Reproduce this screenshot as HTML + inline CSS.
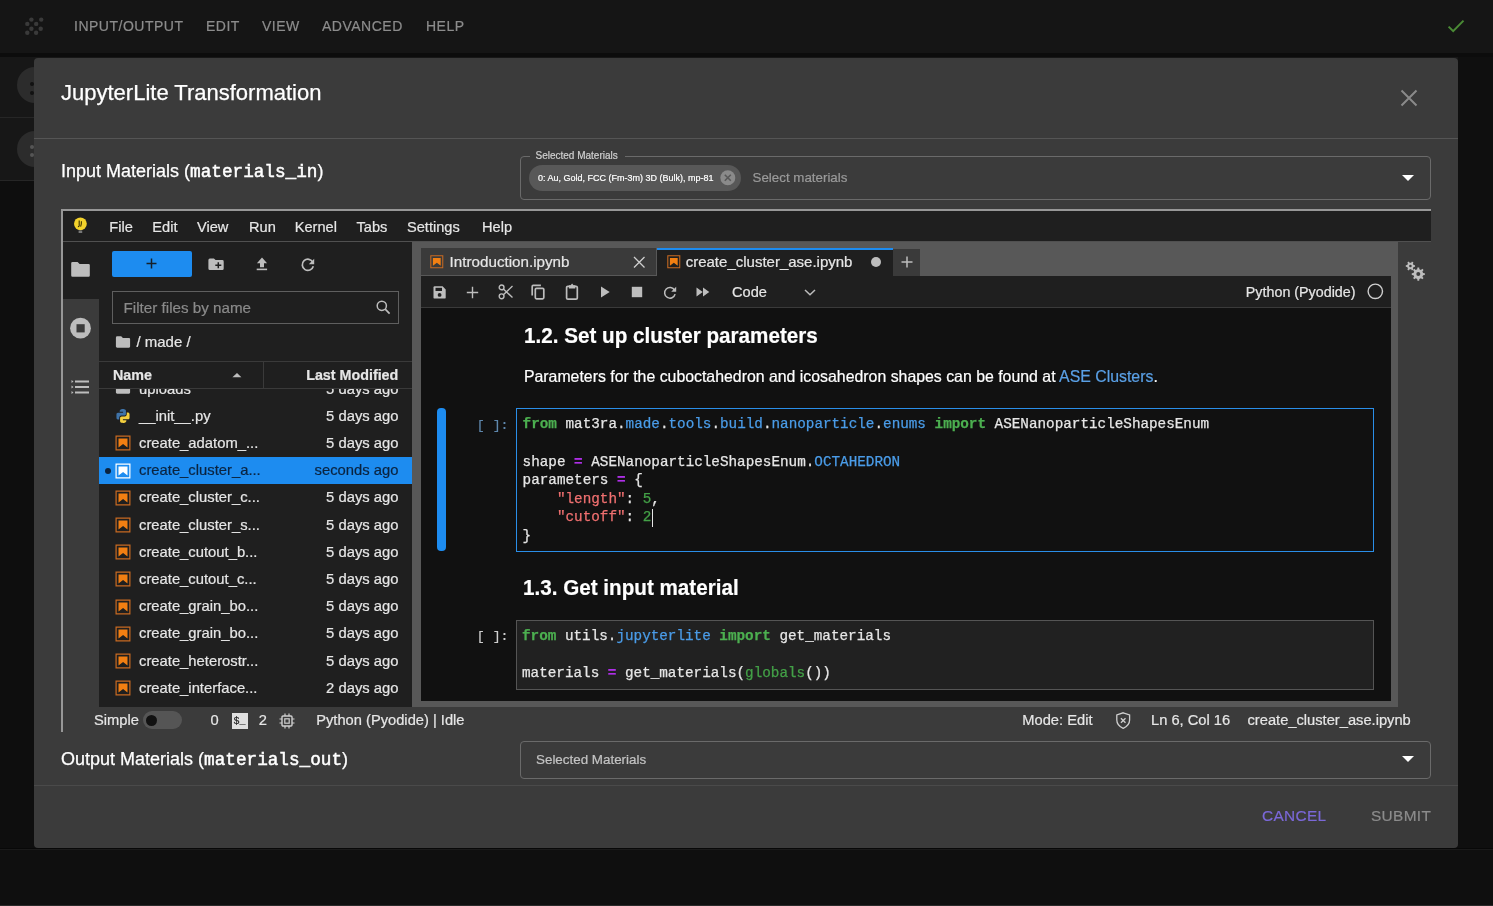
<!DOCTYPE html>
<html><head><meta charset="utf-8">
<style>
*{box-sizing:border-box;margin:0;padding:0}
html,body{width:1493px;height:906px;overflow:hidden;-webkit-font-smoothing:antialiased;background:#121212;font-family:"Liberation Sans",sans-serif;color:#e8e8e8}
.a{position:absolute}
.t{position:absolute;white-space:nowrap;line-height:1;-webkit-text-stroke:0.2px currentColor}
.mn{font-family:"Liberation Mono",monospace}
svg{position:absolute;overflow:visible}
.code{position:absolute;font-family:"Liberation Mono",monospace;font-size:14.3px;color:#e6e6e6;white-space:pre;line-height:18.6px;-webkit-text-stroke:0.25px currentColor}
.kw{color:#4caf50;font-weight:bold}
.pr{color:#4a9ce8}
.op{color:#b030e8;font-weight:bold}
.st{color:#f07070}
.nu{color:#43a047}
</style></head><body><div id="root" style="position:absolute;left:0;top:0;width:1493px;height:906px;will-change:transform">

<div class="a" style="left:0px;top:0px;width:1493px;height:53px;background:#151515;"></div>
<div class="a" style="left:0px;top:53px;width:1493px;height:4px;background:#0c0c0c;"></div>
<div class="a" style="left:0px;top:57px;width:1493px;height:124px;background:#171717;"></div>
<div class="a" style="left:0px;top:117px;width:34px;height:1px;background:#262626;"></div>
<div class="a" style="left:0px;top:180px;width:34px;height:1px;background:#262626;"></div>
<div class="a" style="left:0px;top:181px;width:1493px;height:668px;background:#0e0e0e;"></div>
<div class="a" style="left:0px;top:849px;width:1493px;height:57px;background:#0f0f0f;"></div>
<div class="a" style="left:1458px;top:57px;width:35px;height:792px;background:#0f0f0f;"></div>
<div class="a" style="left:0px;top:848px;width:1493px;height:1px;background:#080808;"></div>
<div class="a" style="left:0px;top:849px;width:1493px;height:1px;background:#1a1a1a;"></div>
<div class="a" style="left:0px;top:905px;width:1493px;height:1px;background:#2a2a2a;"></div>
<div class="a" style="left:16.5px;top:67px;width:36px;height:36px;background:#2c2c2c;border-radius:50%"></div>
<div class="a" style="left:29.5px;top:82px;width:4px;height:4px;background:#111;border-radius:50%"></div>
<div class="a" style="left:29.5px;top:90.5px;width:4px;height:4px;background:#111;border-radius:50%"></div>
<div class="a" style="left:16.5px;top:130.5px;width:36px;height:36px;background:#2c2c2c;border-radius:50%"></div>
<div class="a" style="left:29.5px;top:145px;width:4px;height:4px;background:#555;border-radius:50%"></div>
<div class="a" style="left:29.5px;top:153px;width:4px;height:4px;background:#555;border-radius:50%"></div>
<svg style="left:0px;top:0px" width="60" height="53"><g fill="#3a3a3a"><circle cx="31.4" cy="19.6" r="2.2"/><circle cx="41.2" cy="19.6" r="2.2"/><circle cx="27.3" cy="23.9" r="2.2"/><circle cx="36.2" cy="23.9" r="2.2"/><circle cx="31.4" cy="28.7" r="2.2"/><circle cx="40.7" cy="28.7" r="2.2"/><circle cx="27.3" cy="32.8" r="2.2"/><circle cx="36.1" cy="32.8" r="2.2"/></g></svg>
<div class="t" style="top:19.15px;font-size:14px;color:#8c8c8c;left:74.00px;letter-spacing:0.5px;">INPUT/OUTPUT</div>
<div class="t" style="top:19.15px;font-size:14px;color:#8c8c8c;left:206.00px;letter-spacing:0.5px;">EDIT</div>
<div class="t" style="top:19.15px;font-size:14px;color:#8c8c8c;left:262.00px;letter-spacing:0.5px;">VIEW</div>
<div class="t" style="top:19.15px;font-size:14px;color:#8c8c8c;left:322.00px;letter-spacing:0.5px;">ADVANCED</div>
<div class="t" style="top:19.15px;font-size:14px;color:#8c8c8c;left:426.00px;letter-spacing:0.5px;">HELP</div>
<svg style="left:1440px;top:10px" width="30" height="30"><path d="M8.6 16.6 L13.2 21.2 L23.5 10.6" fill="none" stroke="#4a8a35" stroke-width="2"/></svg>
<div class="a" style="left:34px;top:58px;width:1424px;height:790px;background:#3b3b3b;border-radius:4px"></div>
<div class="t" style="top:82.38px;font-size:22px;color:#fff;left:61.00px;-webkit-text-stroke:0.25px #fff;">JupyterLite Transformation</div>
<svg style="left:1400px;top:89px" width="18" height="18"><path d="M1.5 1.5 L16.5 16.5 M16.5 1.5 L1.5 16.5" stroke="#8a8a8a" stroke-width="2"/></svg>
<div class="a" style="left:34px;top:138px;width:1424px;height:1px;background:#555;"></div>
<div class="t" style="top:161.56px;font-size:18px;color:#fff;left:61.00px;-webkit-text-stroke:0.25px #fff;">Input Materials (<span class="mn" style="font-size:17.7px;-webkit-text-stroke:0.5px #fff">materials_in</span>)</div>
<div class="a" style="left:520px;top:156px;width:911px;height:44px;background:transparent;border:1px solid #6a6a6a;border-radius:4px"></div>
<div class="a" style="left:530px;top:150px;width:95px;height:10px;background:#3b3b3b;"></div>
<div class="t" style="top:150.53px;font-size:10px;color:#d0d0d0;left:535.50px;">Selected Materials</div>
<div class="a" style="left:529px;top:165px;width:211.5px;height:26px;background:#585858;border-radius:13px"></div>
<div class="t" style="top:173.58px;font-size:9px;color:#fff;left:538.00px;">0: Au, Gold, FCC (Fm-3m) 3D (Bulk), mp-81</div>
<svg style="left:720px;top:170px" width="16" height="16"><circle cx="7.8" cy="7.8" r="7.5" fill="#8a8a8a"/><path d="M4.8 4.8 L10.8 10.8 M10.8 4.8 L4.8 10.8" stroke="#585858" stroke-width="1.6"/></svg>
<div class="t" style="top:171.20px;font-size:13.35px;color:#9a9a9a;left:752.50px;">Select materials</div>
<svg style="left:1400px;top:173px" width="16" height="10"><path d="M2 2 L14 2 L8 8 Z" fill="#fff"/></svg>
<div class="a" style="left:61px;top:209px;width:1370px;height:2px;background:#979797;"></div>
<div class="a" style="left:61px;top:209px;width:2px;height:523px;background:#979797;"></div>
<div class="a" style="left:63px;top:211px;width:1368px;height:30px;background:#1f1f1f;"></div>
<div class="a" style="left:63px;top:241px;width:1368px;height:1px;background:#505050;"></div>
<svg style="left:70px;top:214px" width="22" height="22"><circle cx="10.4" cy="9.8" r="6.4" fill="#f3d22b"/><path d="M9.2 6.6 L9.2 11.4 Q9.2 12.8 7.9 12.6 M11.4 7.2 Q11.6 9.8 10.6 12.6" fill="none" stroke="#3a3000" stroke-width="1.1"/><rect x="8.6" y="16.5" width="3.6" height="2.5" fill="#777"/></svg>
<div class="t" style="top:220.14px;font-size:14.6px;color:#e6e6e6;left:109.30px;">File</div>
<div class="t" style="top:220.14px;font-size:14.6px;color:#e6e6e6;left:152.30px;">Edit</div>
<div class="t" style="top:220.14px;font-size:14.6px;color:#e6e6e6;left:197.00px;">View</div>
<div class="t" style="top:220.14px;font-size:14.6px;color:#e6e6e6;left:249.00px;">Run</div>
<div class="t" style="top:220.14px;font-size:14.6px;color:#e6e6e6;left:294.70px;">Kernel</div>
<div class="t" style="top:220.14px;font-size:14.6px;color:#e6e6e6;left:356.50px;">Tabs</div>
<div class="t" style="top:220.14px;font-size:14.6px;color:#e6e6e6;left:407.00px;">Settings</div>
<div class="t" style="top:220.14px;font-size:14.6px;color:#e6e6e6;left:482.00px;">Help</div>
<div class="a" style="left:63px;top:242px;width:35.5px;height:464.5px;background:#3b3b3b;"></div>
<div class="a" style="left:63px;top:242px;width:35.5px;height:56.5px;background:#1f1f1f;"></div>
<div class="a" style="left:98.5px;top:242px;width:0.5px;height:464.5px;background:#2a2a2a;"></div>
<svg style="left:70px;top:260px" width="22" height="20"><path d="M1.2 3.2 Q1.2 1.9 2.5 1.9 L7.6 1.9 L9.6 3.9 L18.6 3.9 Q19.8 3.9 19.8 5.1 L19.8 15.6 Q19.8 16.8 18.6 16.8 L2.5 16.8 Q1.2 16.8 1.2 15.6 Z" fill="#bdbdbd"/></svg>
<svg style="left:69px;top:317px" width="24" height="24"><circle cx="11.5" cy="11.2" r="10.4" fill="#bdbdbd"/><rect x="7.5" y="7.2" width="8.2" height="8.2" fill="#3b3b3b"/></svg>
<svg style="left:70px;top:379px" width="22" height="17"><g fill="#bdbdbd"><rect x="5" y="1.5" width="14" height="2"/><rect x="5" y="7" width="14" height="2"/><rect x="5" y="12.5" width="14" height="2"/><path d="M1.5 1 L3.5 2.5 L1.5 4 Z M1.5 6.5 L3.5 8 L1.5 9.5 Z M1.5 12 L3.5 13.5 L1.5 15 Z"/></g></svg>
<div class="a" style="left:99px;top:242px;width:313px;height:464.5px;background:#1f1f1f;"></div>
<div class="a" style="left:112px;top:251px;width:80px;height:26px;background:#1d8cf0;border-radius:2px"></div>
<svg style="left:144px;top:256px" width="16" height="16"><path d="M7.5 2.5 V12.5 M2.5 7.5 H12.5" stroke="#16202a" stroke-width="1.5"/></svg>
<svg style="left:206px;top:256px" width="20" height="16"><path d="M2.4 4.1 Q2.4 2.4 3.9 2.4 L7.9 2.4 L9.6 4.1 L16.3 4.1 Q17.7 4.1 17.7 5.5 L17.7 12.6 Q17.7 14.1 16.3 14.1 L3.9 14.1 Q2.4 14.1 2.4 12.6 Z" fill="#bdbdbd"/><path d="M12.3 6.3 V12.3 M9.3 9.3 H15.3" stroke="#1f1f1f" stroke-width="1.5"/></svg>
<svg style="left:254px;top:256px" width="16" height="16"><path d="M8 1.6 L13.1 7.3 L10 7.3 L10 11.3 L6 11.3 L6 7.3 L2.9 7.3 Z" fill="#bdbdbd"/><rect x="2.7" y="12.6" width="10.4" height="1.6" fill="#bdbdbd"/></svg>
<svg style="left:299px;top:256px" width="18" height="18"><path d="M13.9 6.3 A5.6 5.6 0 1 0 14.3 10.3" fill="none" stroke="#bdbdbd" stroke-width="1.7"/><path d="M15.2 2.8 L15.2 8.2 L9.8 8.2 Z" fill="#bdbdbd"/></svg>
<div class="a" style="left:112px;top:291px;width:287px;height:32.5px;background:transparent;border:1px solid #5f5f5f"></div>
<div class="t" style="top:299.83px;font-size:15.2px;color:#8a8a8a;left:123.60px;">Filter files by name</div>
<svg style="left:374px;top:298px" width="18" height="18"><circle cx="7.8" cy="7.8" r="4.6" fill="none" stroke="#bdbdbd" stroke-width="1.5"/><path d="M11.2 11.2 L15.6 15.6" stroke="#bdbdbd" stroke-width="1.7"/></svg>
<svg style="left:114px;top:334px" width="18" height="16"><path d="M1.9 3.7 Q1.9 2.3 3.2 2.3 L7.2 2.3 L8.9 3.9 L15 3.9 Q16.1 3.9 16.1 5.1 L16.1 12.6 Q16.1 13.7 15 13.7 L3.2 13.7 Q1.9 13.7 1.9 12.6 Z" fill="#bdbdbd"/></svg>
<div class="t" style="top:334.30px;font-size:15px;color:#e6e6e6;left:136.40px;">/ made /</div>
<div class="a" style="left:99px;top:388px;width:313px;height:318.5px;overflow:hidden">
<svg style="left:15px;top:-8.10px" width="18" height="18"><path d="M1.9 3.7 Q1.9 2.3 3.2 2.3 L7.2 2.3 L8.9 3.9 L15 3.9 Q16.1 3.9 16.1 5.1 L16.1 12.6 Q16.1 13.7 15 13.7 L3.2 13.7 Q1.9 13.7 1.9 12.6 Z" fill="#bdbdbd"/></svg>
<div class="t" style="left:40px;top:-6.43px;font-size:14.8px;color:#e6e6e6">uploads</div>
<div class="t" style="right:13.5px;top:-6.43px;font-size:14.8px;color:#e6e6e6">5 days ago</div>
<svg style="left:15.3px;top:19.10px" width="18" height="18" viewBox="0 0 22 22"><path d="M11.1 6.9V5.8H6.9c0-.5 0-1.3.2-1.6.4-.7.8-1.1 1.7-1.4 1.7-.3 2.5-.3 3.9-.1 1 .1 1.9.9 1.9 1.9v4.2c0 .5-.9 1.6-2 1.6H8.8c-1.5 0-2.4 1.4-2.4 2.8v2.2H4.7C3.5 15.1 3 14 3 13.1V9c-.1-1 .6-2 1.8-2 1.5-.1 6.3-.1 6.3-.1z" fill="#3f73a8"/><path d="M10.9 15.1v1.1h4.2c0 .5 0 1.3-.2 1.6-.4.7-.8 1.1-1.7 1.4-1.7.3-2.5.3-3.9.1-1-.1-1.9-.9-1.9-1.9v-4.2c0-.5.9-1.6 2-1.6h3.8c1.5 0 2.4-1.4 2.4-2.8V6.6h1.7C18.5 6.9 19 8 19 8.9V13c0 1-.7 2.1-1.9 2.1h-6.2z" fill="#f3cf3e"/></svg>
<div class="t" style="left:40px;top:20.77px;font-size:14.8px;color:#e6e6e6">__init__.py</div>
<div class="t" style="right:13.5px;top:20.77px;font-size:14.8px;color:#e6e6e6">5 days ago</div>
<svg style="left:15.3px;top:46.30px" width="18" height="18" viewBox="0 0 22 22"><path d="M18.7 3.3v15.4H3.3V3.3h15.4m1.5-1.5H1.8v18.3h18.3l.1-18.3z" fill="#c86a22"/><path d="M16.5 16.5l-5.4-4.3-5.6 4.3v-11h11z" fill="#f27f12"/></svg>
<div class="t" style="left:40px;top:47.97px;font-size:14.8px;color:#e6e6e6">create_adatom_...</div>
<div class="t" style="right:13.5px;top:47.97px;font-size:14.8px;color:#e6e6e6">5 days ago</div>
<div class="a" style="left:0;top:68.90px;width:313px;height:27.2px;background:#1d8cf0"></div>
<div class="a" style="left:6px;top:79.50px;width:6px;height:6px;border-radius:50%;background:#0b2440"></div>
<svg style="left:15.3px;top:73.50px" width="18" height="18" viewBox="0 0 22 22"><path d="M18.7 3.3v15.4H3.3V3.3h15.4m1.5-1.5H1.8v18.3h18.3l.1-18.3z" fill="#ffffff"/><path d="M16.5 16.5l-5.4-4.3-5.6 4.3v-11h11z" fill="#ffffff"/></svg>
<div class="t" style="left:40px;top:75.17px;font-size:14.8px;color:#0b2440">create_cluster_a...</div>
<div class="t" style="right:13.5px;top:75.17px;font-size:14.8px;color:#0b2440">seconds ago</div>
<svg style="left:15.3px;top:100.70px" width="18" height="18" viewBox="0 0 22 22"><path d="M18.7 3.3v15.4H3.3V3.3h15.4m1.5-1.5H1.8v18.3h18.3l.1-18.3z" fill="#c86a22"/><path d="M16.5 16.5l-5.4-4.3-5.6 4.3v-11h11z" fill="#f27f12"/></svg>
<div class="t" style="left:40px;top:102.37px;font-size:14.8px;color:#e6e6e6">create_cluster_c...</div>
<div class="t" style="right:13.5px;top:102.37px;font-size:14.8px;color:#e6e6e6">5 days ago</div>
<svg style="left:15.3px;top:127.90px" width="18" height="18" viewBox="0 0 22 22"><path d="M18.7 3.3v15.4H3.3V3.3h15.4m1.5-1.5H1.8v18.3h18.3l.1-18.3z" fill="#c86a22"/><path d="M16.5 16.5l-5.4-4.3-5.6 4.3v-11h11z" fill="#f27f12"/></svg>
<div class="t" style="left:40px;top:129.57px;font-size:14.8px;color:#e6e6e6">create_cluster_s...</div>
<div class="t" style="right:13.5px;top:129.57px;font-size:14.8px;color:#e6e6e6">5 days ago</div>
<svg style="left:15.3px;top:155.10px" width="18" height="18" viewBox="0 0 22 22"><path d="M18.7 3.3v15.4H3.3V3.3h15.4m1.5-1.5H1.8v18.3h18.3l.1-18.3z" fill="#c86a22"/><path d="M16.5 16.5l-5.4-4.3-5.6 4.3v-11h11z" fill="#f27f12"/></svg>
<div class="t" style="left:40px;top:156.77px;font-size:14.8px;color:#e6e6e6">create_cutout_b...</div>
<div class="t" style="right:13.5px;top:156.77px;font-size:14.8px;color:#e6e6e6">5 days ago</div>
<svg style="left:15.3px;top:182.30px" width="18" height="18" viewBox="0 0 22 22"><path d="M18.7 3.3v15.4H3.3V3.3h15.4m1.5-1.5H1.8v18.3h18.3l.1-18.3z" fill="#c86a22"/><path d="M16.5 16.5l-5.4-4.3-5.6 4.3v-11h11z" fill="#f27f12"/></svg>
<div class="t" style="left:40px;top:183.97px;font-size:14.8px;color:#e6e6e6">create_cutout_c...</div>
<div class="t" style="right:13.5px;top:183.97px;font-size:14.8px;color:#e6e6e6">5 days ago</div>
<svg style="left:15.3px;top:209.50px" width="18" height="18" viewBox="0 0 22 22"><path d="M18.7 3.3v15.4H3.3V3.3h15.4m1.5-1.5H1.8v18.3h18.3l.1-18.3z" fill="#c86a22"/><path d="M16.5 16.5l-5.4-4.3-5.6 4.3v-11h11z" fill="#f27f12"/></svg>
<div class="t" style="left:40px;top:211.17px;font-size:14.8px;color:#e6e6e6">create_grain_bo...</div>
<div class="t" style="right:13.5px;top:211.17px;font-size:14.8px;color:#e6e6e6">5 days ago</div>
<svg style="left:15.3px;top:236.70px" width="18" height="18" viewBox="0 0 22 22"><path d="M18.7 3.3v15.4H3.3V3.3h15.4m1.5-1.5H1.8v18.3h18.3l.1-18.3z" fill="#c86a22"/><path d="M16.5 16.5l-5.4-4.3-5.6 4.3v-11h11z" fill="#f27f12"/></svg>
<div class="t" style="left:40px;top:238.37px;font-size:14.8px;color:#e6e6e6">create_grain_bo...</div>
<div class="t" style="right:13.5px;top:238.37px;font-size:14.8px;color:#e6e6e6">5 days ago</div>
<svg style="left:15.3px;top:263.90px" width="18" height="18" viewBox="0 0 22 22"><path d="M18.7 3.3v15.4H3.3V3.3h15.4m1.5-1.5H1.8v18.3h18.3l.1-18.3z" fill="#c86a22"/><path d="M16.5 16.5l-5.4-4.3-5.6 4.3v-11h11z" fill="#f27f12"/></svg>
<div class="t" style="left:40px;top:265.57px;font-size:14.8px;color:#e6e6e6">create_heterostr...</div>
<div class="t" style="right:13.5px;top:265.57px;font-size:14.8px;color:#e6e6e6">5 days ago</div>
<svg style="left:15.3px;top:291.10px" width="18" height="18" viewBox="0 0 22 22"><path d="M18.7 3.3v15.4H3.3V3.3h15.4m1.5-1.5H1.8v18.3h18.3l.1-18.3z" fill="#c86a22"/><path d="M16.5 16.5l-5.4-4.3-5.6 4.3v-11h11z" fill="#f27f12"/></svg>
<div class="t" style="left:40px;top:292.77px;font-size:14.8px;color:#e6e6e6">create_interface...</div>
<div class="t" style="right:13.5px;top:292.77px;font-size:14.8px;color:#e6e6e6">2 days ago</div>
</div>
<div class="a" style="left:99px;top:361px;width:313px;height:1px;background:#3a3a3a;"></div>
<div class="a" style="left:99px;top:362px;width:313px;height:26px;background:#1f1f1f;"></div>
<div class="a" style="left:99px;top:388px;width:313px;height:1px;background:#3a3a3a;"></div>
<div class="a" style="left:262.5px;top:362px;width:1px;height:26px;background:#3a3a3a;"></div>
<div class="t" style="top:367.60px;font-size:14.3px;color:#e6e6e6;left:113.00px;font-weight:bold;">Name</div>
<svg style="left:230px;top:370px" width="14" height="10"><path d="M2.4 7.2 L7 2.9 L11.4 7.2 Z" fill="#bdbdbd"/></svg>
<div class="t" style="top:367.60px;font-size:14.3px;color:#e6e6e6;right:1094.70px;font-weight:bold;">Last Modified</div>
<div class="a" style="left:412px;top:242px;width:986px;height:464.5px;background:#585858;"></div>
<div class="a" style="left:421px;top:248px;width:236px;height:27.5px;background:#3a3a3a;border-right:1px solid #585858;border-bottom:1px solid #585858"></div>
<div class="a" style="left:657px;top:248px;width:236.3px;height:28px;background:#1f1f1f;"></div>
<div class="a" style="left:657px;top:248px;width:236.3px;height:2px;background:#1d8cf0;"></div>
<div class="a" style="left:893.3px;top:249px;width:26.5px;height:26.5px;background:#3a3a3a;"></div>
<svg style="left:429.4px;top:253.7px" width="15.6" height="15.6" viewBox="0 0 22 22"><path d="M18.7 3.3v15.4H3.3V3.3h15.4m1.5-1.5H1.8v18.3h18.3l.1-18.3z" fill="#c86a22"/><path d="M16.5 16.5l-5.4-4.3-5.6 4.3v-11h11z" fill="#f27f12"/></svg>
<div class="t" style="top:254.13px;font-size:15.2px;color:#e6e6e6;left:449.60px;">Introduction.ipynb</div>
<svg style="left:632px;top:255px" width="14" height="14"><path d="M2 2 L12.5 12.5 M12.5 2 L2 12.5" stroke="#cfcfcf" stroke-width="1.3"/></svg>
<svg style="left:665.7px;top:253.7px" width="15.6" height="15.6" viewBox="0 0 22 22"><path d="M18.7 3.3v15.4H3.3V3.3h15.4m1.5-1.5H1.8v18.3h18.3l.1-18.3z" fill="#c86a22"/><path d="M16.5 16.5l-5.4-4.3-5.6 4.3v-11h11z" fill="#f27f12"/></svg>
<div class="t" style="top:254.30px;font-size:15px;color:#e6e6e6;left:685.70px;">create_cluster_ase.ipynb</div>
<div class="a" style="left:870.5px;top:257.2px;width:10px;height:10px;background:#bdbdbd;border-radius:50%"></div>
<svg style="left:900px;top:255px" width="14" height="14"><path d="M7 1.5 V12.5 M1.5 7 H12.5" stroke="#bdbdbd" stroke-width="1.5"/></svg>
<div class="a" style="left:421px;top:276px;width:970px;height:31px;background:#1f1f1f;"></div>
<div class="a" style="left:421px;top:307px;width:970px;height:1px;background:#3a3a3a;"></div>
<svg style="left:432px;top:284.5px" width="15" height="15"><path d="M1.5 2.5 Q1.5 1.3 2.7 1.3 L10.6 1.3 L13.7 4.4 L13.7 12.4 Q13.7 13.6 12.5 13.6 L2.7 13.6 Q1.5 13.6 1.5 12.4 Z" fill="#bdbdbd"/><rect x="3.5" y="2.8" width="6.5" height="3.2" fill="#1f1f1f"/><circle cx="7.6" cy="9.9" r="1.9" fill="#1f1f1f"/></svg>
<svg style="left:465px;top:284.5px" width="15" height="15"><path d="M7.5 1.8 V13.2 M1.8 7.5 H13.2" stroke="#bdbdbd" stroke-width="1.4"/></svg>
<svg style="left:497.5px;top:284px" width="16" height="16"><circle cx="3.6" cy="12.3" r="2.4" fill="none" stroke="#bdbdbd" stroke-width="1.4"/><circle cx="3.6" cy="3.4" r="2.4" fill="none" stroke="#bdbdbd" stroke-width="1.4"/><path d="M5.4 4.9 L14.5 13.6 M5.4 10.8 L14.5 2.1" stroke="#bdbdbd" stroke-width="1.4"/></svg>
<svg style="left:530px;top:284px" width="16" height="17"><path d="M2.2 11.5 V2.4 Q2.2 1.4 3.2 1.4 H10.9" fill="none" stroke="#bdbdbd" stroke-width="1.7"/><rect x="5.3" y="4.3" width="8.5" height="10.5" rx="1.2" fill="none" stroke="#bdbdbd" stroke-width="1.7"/></svg>
<svg style="left:563.5px;top:283.5px" width="16" height="17"><rect x="2.6" y="2.3" width="10.7" height="12.9" rx="1.3" fill="none" stroke="#bdbdbd" stroke-width="1.7"/><path d="M4.9 1.3 H11.3 V4.6 H4.9 Z M6.4 1.5 L8.1 -0.4 L9.8 1.5 Z" fill="#bdbdbd"/></svg>
<svg style="left:598px;top:285px" width="14" height="14"><path d="M3 1.5 L11.7 7 L3 12.5 Z" fill="#bdbdbd"/></svg>
<svg style="left:630px;top:285px" width="14" height="14"><rect x="1.8" y="1.8" width="10.4" height="10.4" fill="#bdbdbd"/></svg>
<svg style="left:662px;top:284.5px" width="16" height="15"><path d="M12.6 5.3 A5.3 5.3 0 1 0 13.1 9.1" fill="none" stroke="#bdbdbd" stroke-width="1.5"/><path d="M14.2 1.8 L14.2 6.8 L9.2 6.8 Z" fill="#bdbdbd"/></svg>
<svg style="left:695px;top:285px" width="16" height="14"><path d="M1.5 2.5 L7.8 7 L1.5 11.5 Z M8 2.5 L14.3 7 L8 11.5 Z" fill="#bdbdbd"/></svg>
<div class="t" style="top:284.64px;font-size:14.6px;color:#e6e6e6;left:732.00px;">Code</div>
<svg style="left:803px;top:288px" width="14" height="9"><path d="M2 2 L7 6.8 L12 2" fill="none" stroke="#bdbdbd" stroke-width="1.5"/></svg>
<div class="t" style="top:284.90px;font-size:14.3px;color:#e6e6e6;right:137.50px;">Python (Pyodide)</div>
<svg style="left:1366px;top:282px" width="20" height="20"><circle cx="9.3" cy="9.3" r="7.2" fill="none" stroke="#cfcfcf" stroke-width="1.4"/></svg>
<div class="a" style="left:421px;top:308px;width:970px;height:393px;background:#111111;"></div>
<div class="t" style="top:324.62px;font-size:22.3px;color:#fff;left:523.90px;font-weight:bold;transform:scaleX(0.926);transform-origin:0 0;">1.2. Set up cluster parameters</div>
<div class="t" style="top:368.77px;font-size:15.86px;color:#fff;left:523.90px;">Parameters for the cuboctahedron and icosahedron shapes can be found at <span style="color:#5aa0e6">ASE Clusters</span>.</div>
<div class="a" style="left:437.2px;top:408.1px;width:8.7px;height:143.4px;background:#1d8cf0;border-radius:4px"></div>
<div class="t" style="top:418.89px;font-size:13.2px;color:#5f88ad;right:984.50px;font-family:'Liberation Mono',monospace;">[ ]:</div>
<div class="a" style="left:516.3px;top:408.1px;width:857.5px;height:143.6px;background:#111111;border:1px solid #2a8ee8"></div>
<div class="code" style="left:522.6px;top:415.4px"><span class="kw">from</span> mat3ra.<span class="pr">made</span>.<span class="pr">tools</span>.<span class="pr">build</span>.<span class="pr">nanoparticle</span>.<span class="pr">enums</span> <span class="kw">import</span> ASENanoparticleShapesEnum

shape <span class="op">=</span> ASENanoparticleShapesEnum.<span class="pr">OCTAHEDRON</span>
parameters <span class="op">=</span> {
    <span class="st">"length"</span>: <span class="nu">5</span>,
    <span class="st">"cutoff"</span>: <span class="nu">2</span>
}</div>
<div class="a" style="left:651.5px;top:509px;width:1.2px;height:18px;background:#e6e6e6;"></div>
<div class="t" style="top:577.12px;font-size:22.3px;color:#fff;left:523.40px;font-weight:bold;transform:scaleX(0.926);transform-origin:0 0;">1.3. Get input material</div>
<div class="t" style="top:630.39px;font-size:13.2px;color:#cfcfcf;right:984.50px;font-family:'Liberation Mono',monospace;">[ ]:</div>
<div class="a" style="left:516px;top:620.3px;width:858px;height:69.3px;background:#212121;border:1px solid #555"></div>
<div class="code" style="left:522px;top:627.2px"><span class="kw">from</span> utils.<span class="pr">jupyterlite</span> <span class="kw">import</span> get_materials

materials <span class="op">=</span> get_materials(<span class="nu">globals</span>())</div>
<div class="a" style="left:1398px;top:242px;width:33px;height:464.5px;background:#3b3b3b;"></div>
<svg style="left:1400px;top:255px" width="32" height="32"><polygon points="13.66,10.03 15.02,10.14 15.02,11.86 13.66,11.97 12.87,13.34 13.45,14.57 11.97,15.43 11.19,14.31 9.61,14.31 8.83,15.43 7.35,14.57 7.93,13.34 7.14,11.97 5.78,11.86 5.78,10.14 7.14,10.03 7.93,8.66 7.35,7.43 8.83,6.57 9.61,7.69 11.19,7.69 11.97,6.57 13.45,7.43 12.87,8.66" fill="#bdbdbd"/><circle cx="10.4" cy="11" r="1.3" fill="#3b3b3b"/><polygon points="23.09,18.05 24.84,18.20 24.84,20.00 23.09,20.15 22.43,21.74 23.56,23.08 22.28,24.36 20.94,23.23 19.35,23.89 19.20,25.64 17.40,25.64 17.25,23.89 15.66,23.23 14.32,24.36 13.04,23.08 14.17,21.74 13.51,20.15 11.76,20.00 11.76,18.20 13.51,18.05 14.17,16.46 13.04,15.12 14.32,13.84 15.66,14.97 17.25,14.31 17.40,12.56 19.20,12.56 19.35,14.31 20.94,14.97 22.28,13.84 23.56,15.12 22.43,16.46" fill="#bdbdbd"/><circle cx="18.3" cy="19.1" r="2.0" fill="#3b3b3b"/></svg>
<div class="a" style="left:63px;top:706.5px;width:1368px;height:25.5px;background:#3b3b3b;"></div>
<div class="t" style="top:712.86px;font-size:14.7px;color:#e6e6e6;left:94.00px;">Simple</div>
<div class="a" style="left:143px;top:711px;width:39px;height:18px;background:#555;border-radius:9px"></div>
<div class="a" style="left:146px;top:714.5px;width:11px;height:11px;background:#111;border-radius:50%"></div>
<div class="t" style="top:712.86px;font-size:14.7px;color:#e6e6e6;left:210.50px;">0</div>
<div class="a" style="left:231.8px;top:712.6px;width:16.1px;height:16.1px;background:#e0e0e0;"></div>
<div class="t" style="top:717.34px;font-size:10px;color:#222;left:233.50px;font-family:'Liberation Mono',monospace;">$_</div>
<div class="t" style="top:712.86px;font-size:14.7px;color:#e6e6e6;left:258.80px;">2</div>
<svg style="left:278px;top:712px" width="18" height="18"><rect x="4" y="4" width="10" height="10" rx="1" fill="none" stroke="#cfcfcf" stroke-width="1.4"/><rect x="6.8" y="6.8" width="4.4" height="4.4" fill="none" stroke="#cfcfcf" stroke-width="1.2"/><path d="M7 1.5V4 M11 1.5V4 M7 14V16.5 M11 14V16.5 M1.5 7H4 M1.5 11H4 M14 7H16.5 M14 11H16.5" stroke="#cfcfcf" stroke-width="1.2"/></svg>
<div class="t" style="top:712.86px;font-size:14.7px;color:#e6e6e6;left:316.20px;">Python (Pyodide) | Idle</div>
<div class="t" style="top:712.86px;font-size:14.7px;color:#e6e6e6;left:1022.30px;">Mode: Edit</div>
<svg style="left:1114px;top:711px" width="19" height="19"><path d="M9.2 1.8 L15.6 4 L15.6 9 Q15.6 14.5 9.2 17.3 Q2.8 14.5 2.8 9 L2.8 4 Z" fill="none" stroke="#cfcfcf" stroke-width="1.3"/><path d="M6.9 7.2 L11.5 11.8 M11.5 7.2 L6.9 11.8" stroke="#cfcfcf" stroke-width="1.3"/></svg>
<div class="t" style="top:712.86px;font-size:14.7px;color:#e6e6e6;left:1151.00px;">Ln 6, Col 16</div>
<div class="t" style="top:712.86px;font-size:14.7px;color:#e6e6e6;left:1247.50px;">create_cluster_ase.ipynb</div>
<div class="t" style="top:749.76px;font-size:18px;color:#fff;left:61.00px;-webkit-text-stroke:0.25px #fff;">Output Materials (<span class="mn" style="font-size:17.7px;-webkit-text-stroke:0.5px #fff">materials_out</span>)</div>
<div class="a" style="left:520px;top:741px;width:911px;height:38px;background:transparent;border:1px solid #6a6a6a;border-radius:4px"></div>
<div class="t" style="top:752.66px;font-size:13.4px;color:#c4c4c4;left:536.00px;">Selected Materials</div>
<svg style="left:1400px;top:754px" width="16" height="10"><path d="M2 2 L14 2 L8 8 Z" fill="#fff"/></svg>
<div class="a" style="left:34px;top:785px;width:1424px;height:1px;background:#4a4a4a;"></div>
<div class="t" style="top:807.66px;font-size:15.4px;color:#7b68d8;left:1262.00px;letter-spacing:0.35px;">CANCEL</div>
<div class="t" style="top:807.66px;font-size:15.4px;color:#8c8c8c;left:1371.00px;letter-spacing:0.35px;">SUBMIT</div>
</div></body></html>
